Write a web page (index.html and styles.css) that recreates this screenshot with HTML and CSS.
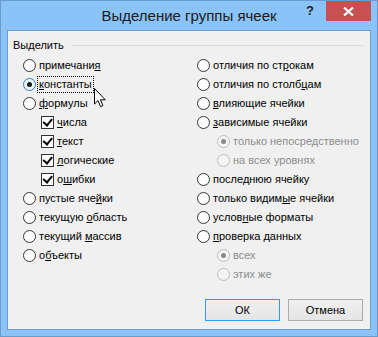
FILE: index.html
```html
<!DOCTYPE html>
<html lang="ru">
<head>
<meta charset="utf-8">
<title>Выделение группы ячеек</title>
<link rel="stylesheet" href="styles.css">
</head>
<body>
<div class="window">
  <div class="titlebar">
    <div></div>
    <div class="title">Выделение группы ячеек</div>
    <div class="tb-right">
      <span class="help">?</span>
      <span class="close"><svg width="11" height="9" viewBox="0 0 11 9"><path d="M1 0.5 L10 8.5 M10 0.5 L1 8.5" stroke="#fff" stroke-width="2.2" fill="none"/></svg></span>
    </div>
  </div>
  <div class="client">
    <div class="group">
      <div class="group-head"><span class="group-label">Выделить</span><span class="group-line"></span></div>
      <div class="cols">
        <div class="col">
          <div class="item"><span class="radio"></span><span class="lbl">примечани<u>я</u></span></div>
          <div class="item"><span class="radio checked hot"></span><span class="lbl focus"><u>к</u>онстанты</span></div>
          <div class="item"><span class="radio"></span><span class="lbl"><u>ф</u>ормулы</span></div>
          <div class="item sub-l"><span class="check"></span><span class="lbl"><u>ч</u>исла</span></div>
          <div class="item sub-l"><span class="check"></span><span class="lbl"><u>т</u>екст</span></div>
          <div class="item sub-l"><span class="check"></span><span class="lbl"><u>л</u>огические</span></div>
          <div class="item sub-l"><span class="check"></span><span class="lbl">о<u>ш</u>ибки</span></div>
          <div class="item"><span class="radio"></span><span class="lbl">пустые яче<u>й</u>ки</span></div>
          <div class="item"><span class="radio"></span><span class="lbl">текущую <u>о</u>бласть</span></div>
          <div class="item"><span class="radio"></span><span class="lbl">текущий <u>м</u>ассив</span></div>
          <div class="item"><span class="radio"></span><span class="lbl">о<u>б</u>ъекты</span></div>
        </div>
        <div class="col">
          <div class="item"><span class="radio"></span><span class="lbl">отличия по ст<u>р</u>окам</span></div>
          <div class="item"><span class="radio"></span><span class="lbl">отличия по столб<u>ц</u>ам</span></div>
          <div class="item"><span class="radio"></span><span class="lbl"><u>в</u>лияющие ячейки</span></div>
          <div class="item"><span class="radio"></span><span class="lbl"><u>з</u>ависимые ячейки</span></div>
          <div class="item sub-r disabled"><span class="radio checked"></span><span class="lbl">только непосредственно</span></div>
          <div class="item sub-r disabled"><span class="radio"></span><span class="lbl">на всех уровнях</span></div>
          <div class="item"><span class="radio"></span><span class="lbl">после<u>д</u>нюю ячейку</span></div>
          <div class="item"><span class="radio"></span><span class="lbl">только видим<u>ы</u>е ячейки</span></div>
          <div class="item"><span class="radio"></span><span class="lbl">услов<u>н</u>ые форматы</span></div>
          <div class="item"><span class="radio"></span><span class="lbl"><u>п</u>роверка данных</span></div>
          <div class="item sub-r disabled"><span class="radio checked"></span><span class="lbl">всех</span></div>
          <div class="item sub-r disabled"><span class="radio"></span><span class="lbl">этих же</span></div>
        </div>
      </div>
    </div>
    <div class="buttons">
      <button class="btn default">ОК</button>
      <button class="btn">Отмена</button>
    </div>
    <svg class="cursor" width="13" height="20" viewBox="0 0 13 20"><path d="M0.5 0.5 L0.5 16 L4 12.6 L6.6 18.6 L8.9 17.6 L6.4 11.8 L11.3 11.8 Z" fill="#fff" stroke="#000" stroke-width="1" stroke-linejoin="miter"/></svg>
  </div>
</div>
</body>
</html>
```
FILE: styles.css
```css
* { box-sizing: border-box; }
html, body { margin: 0; padding: 0; }
body {
  width: 378px;
  height: 337px;
  overflow: hidden;
  font-family: "Liberation Sans", Arial, sans-serif;
  font-size: 11px;
  color: #000;
}
.window {
  width: 378px;
  height: 337px;
  background: #8ac3f8;
  border: 1px solid #6a9bcf;
  padding: 0 6px 6px 6px;
  display: flex;
  flex-direction: column;
}
.titlebar {
  height: 29px;
  display: grid;
  grid-template-columns: 1fr auto 1fr;
  align-items: start;
}
.title {
  font-size: 15px;
  line-height: 29px;
  color: #1a1a1a;
  white-space: nowrap;
}
.tb-right {
  display: flex;
  justify-content: flex-end;
  align-items: flex-start;
}
.help {
  width: 32px;
  height: 20px;
  text-align: center;
  font-weight: bold;
  font-size: 13px;
  line-height: 20px;
  color: #222;
}
.close {
  width: 45px;
  height: 20px;
  background: #c75050;
  display: flex;
  align-items: center;
  justify-content: center;
}
.client {
  position: relative;
  flex: 1;
  background: #f0f0f0;
  border: 1px solid #6e9dcd;
  padding: 6px 7px 8px 0;
  display: flex;
  flex-direction: column;
}
.group { padding: 0 0 0 5px; }
.group-head {
  display: flex;
  align-items: center;
  height: 16px;
}
.group-label {
  line-height: 16px;
  padding-right: 7px;
}
.group-line {
  flex: 1;
  height: 1px;
  background: #dcdcdc;
}
.cols {
  display: grid;
  grid-template-columns: 174px 1fr;
  padding-left: 10px;
  margin-top: 3px;
}
.col { display: flex; flex-direction: column; }
.item {
  height: 19px;
  display: flex;
  align-items: center;
  gap: 3px;
  white-space: nowrap;
}
.sub-l { padding-left: 18px; }
.sub-r { padding-left: 20px; }
.lbl { line-height: 15px; }
.lbl u { text-decoration: underline; text-underline-offset: 1px; }
.focus {
  outline: 1px dotted #000;
  outline-offset: 0;
  padding: 0 1px;
  margin-left: -1px;
}
.radio {
  width: 13px;
  height: 13px;
  flex: none;
  border-radius: 50%;
  border: 1px solid #333;
  background: #fff;
  position: relative;
}
.radio.checked::after {
  content: "";
  position: absolute;
  left: 3px;
  top: 3px;
  width: 5px;
  height: 5px;
  border-radius: 50%;
  background: #1a1a1a;
}
.radio.hot { border-color: #3c7fb1; background: #eaf6fd; }
.disabled .lbl { color: #8d8d8d; }
.disabled .radio { border-color: #bcbcbc; background: #f4f4f4; }
.disabled .radio.checked::after { background: #8a8a8a; }
.check {
  width: 13px;
  height: 13px;
  flex: none;
  border: 1px solid #333;
  background: #fff;
  position: relative;
}
.check::after {
  content: "";
  position: absolute;
  left: 2px;
  top: 0px;
  width: 4px;
  height: 7px;
  border-right: 2px solid #000;
  border-bottom: 2px solid #000;
  transform: rotate(40deg);
  transform-origin: 60% 60%;
}
.buttons {
  margin-top: auto;
  display: flex;
  justify-content: flex-end;
  gap: 8px;
}
.btn {
  width: 75px;
  height: 22px;
  font-family: "Liberation Sans", Arial, sans-serif;
  font-size: 11px;
  color: #000;
  background: linear-gradient(#f0f0f0, #e5e5e5);
  border: 1px solid #acacac;
  padding: 0;
}
.btn.default { border-color: #3399ff; }
.cursor {
  position: absolute;
  left: 86px;
  top: 57px;
}
```
